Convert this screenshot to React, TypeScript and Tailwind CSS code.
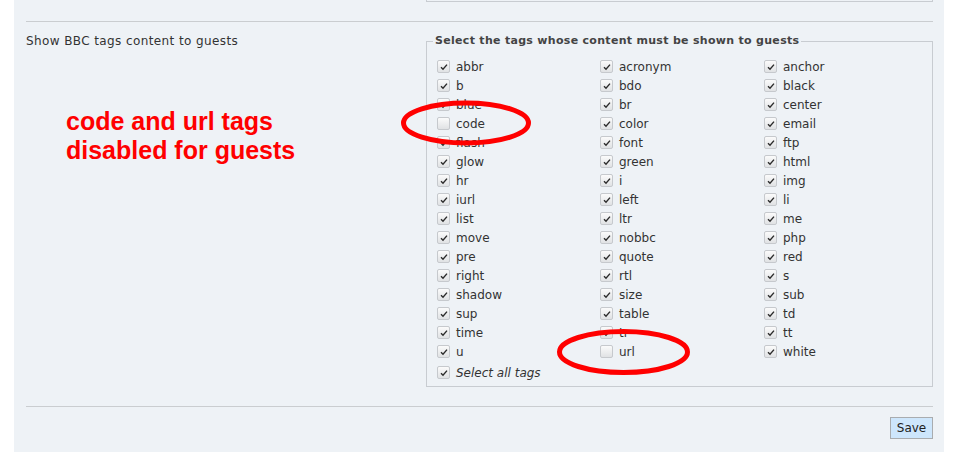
const col1 = ["abbr", "b", "blue", "code", "flash", "glow", "hr", "iurl", "list", "move", "pre", "right", "shadow", "sup", "time", "u"];
const col2 = ["acronym", "bdo", "br", "color", "font", "green", "i", "left", "ltr", "nobbc", "quote", "rtl", "size", "table", "tr", "url"];
const col3 = ["anchor", "black", "center", "email", "ftp", "html", "img", "li", "me", "php", "red", "s", "sub", "td", "tt", "white"];

const unchecked = new Set(["code", "url"]);

function Box({ checked }: { checked: boolean }) {
  return (
    <span className="flex h-[13px] w-[13px] shrink-0 items-center justify-center rounded-[2px] border border-[#c6c9cd] bg-gradient-to-b from-[#fbfbfb] to-[#e0e2e4]">
      {checked && (
        <svg width="10" height="10" viewBox="0 0 10 10" fill="none">
          <path d="M2 5.2 L4 7.2 L8 2.6" stroke="#2b2b2b" strokeWidth="1.4" />
        </svg>
      )}
    </span>
  );
}

function Tag({ name, italic }: { name: string; italic?: boolean }) {
  return (
    <label className="flex h-[19px] items-center gap-[6px]">
      <Box checked={!unchecked.has(name)} />
      <span className={italic ? "italic" : ""}>{name}</span>
    </label>
  );
}

export default function App() {
  const rows = col1.map((_, i) => [col1[i], col2[i], col3[i]]);

  return (
    <div className="relative flex min-h-[452px] bg-white font-['DejaVu_Sans',sans-serif] text-[12px] leading-[14px] text-[#333]">
      <div className="ml-[14px] w-[930px] bg-[#eef2f6] pl-[12px] pr-[11px]">
        {/* tail of the previous block */}
        <div className="ml-[400px] h-[2px] border-x border-b border-[#c8ccd1]" />
        <div className="mt-[19px] h-px bg-[#cacdd0]" />

        <div className="mt-[12px] flex">
          <div className="w-[400px] shrink-0 tracking-[0.4px]">Show BBC tags content to guests</div>
          <fieldset className="flex-1 border border-[#c8ccd1] pb-[4px] pl-[6px] pr-[6px]">
            <legend className="px-[2px] text-[11px] font-bold tracking-[0.3px] text-[#444]">
              Select the tags whose content must be shown to guests
            </legend>
            <div className="grid grid-cols-[163px_164px_1fr] pl-[4px] pt-[9px]">
              {rows.map((r) =>
                r.map((name) => <Tag key={name} name={name} />)
              )}
            </div>
            <div className="mt-[2px] pl-[4px]">
              <Tag name="Select all tags" italic />
            </div>
          </fieldset>
        </div>

        <div className="mt-[19px] h-px bg-[#cacdd0]" />

        <div className="mt-[10px] flex justify-end">
          <button className="h-[22px] w-[43px] border border-[#a9acaf] bg-[#cde6fc] text-[12px] text-[#222]">
            Save
          </button>
        </div>
      </div>

      {/* annotation overlay */}
      <div className="absolute left-[66px] top-[107px] font-['Liberation_Sans',Arial,sans-serif] text-[25px] font-bold leading-[29px] text-[#ff0000]">
        <div>code and url tags</div>
        <div>disabled for guests</div>
      </div>
      <svg className="pointer-events-none absolute left-0 top-0" width="958" height="452" viewBox="0 0 958 452" fill="none">
        <ellipse cx="466" cy="123" rx="62.5" ry="20" stroke="#ff0000" strokeWidth="5" />
        <ellipse cx="623.5" cy="352" rx="64" ry="20.5" stroke="#ff0000" strokeWidth="5" />
      </svg>
    </div>
  );
}
